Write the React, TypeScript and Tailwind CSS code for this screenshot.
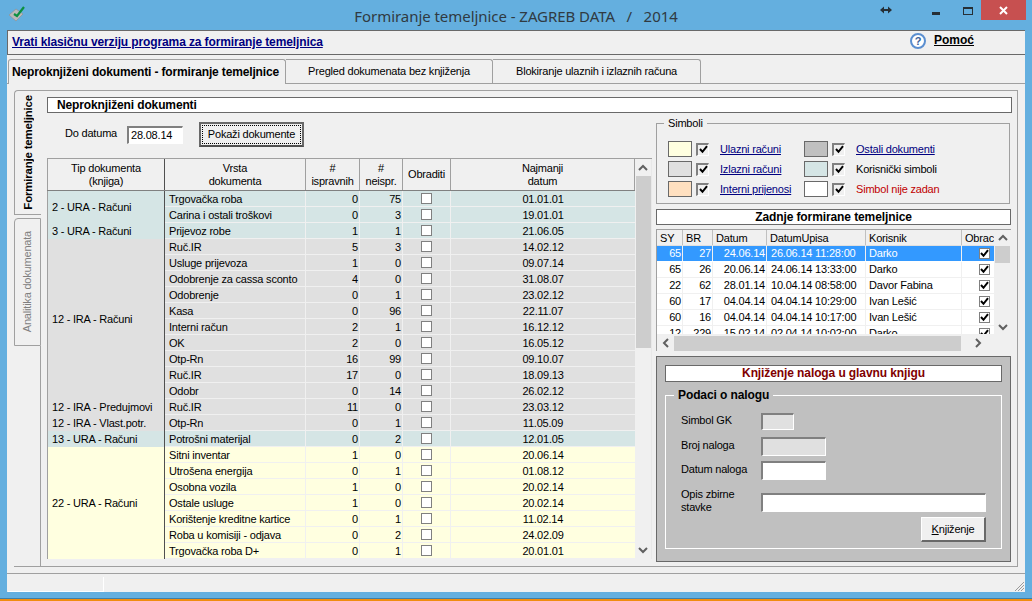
import React from "react";

type Row = [string, string, string, string];
type Group = { label: string; bg: string; rows: Row[] };

const groups: Group[] = [
  { label: "2 - URA - Računi", bg: "bg-[#d5e5e5]", rows: [["Trgovačka roba", "0", "75", "01.01.01"], ["Carina i ostali troškovi", "0", "3", "19.01.01"]] },
  { label: "3 - URA - Računi", bg: "bg-[#d5e5e5]", rows: [["Prijevoz robe", "1", "1", "21.06.05"]] },
  {
    label: "12 - IRA - Računi",
    bg: "bg-[#e0e0e0]",
    rows: [
      ["Ruč.IR", "5", "3", "14.02.12"],
      ["Usluge prijevoza", "1", "0", "09.07.14"],
      ["Odobrenje za cassa sconto", "4", "0", "31.08.07"],
      ["Odobrenje", "0", "1", "23.02.12"],
      ["Kasa", "0", "96", "22.11.07"],
      ["Interni račun", "2", "1", "16.12.12"],
      ["OK", "2", "0", "16.05.12"],
      ["Otp-Rn", "16", "99", "09.10.07"],
      ["Ruč.IR", "17", "0", "18.09.13"],
      ["Odobr", "0", "14", "26.02.12"],
    ],
  },
  { label: "12 - IRA - Predujmovi", bg: "bg-[#e0e0e0]", rows: [["Ruč.IR", "11", "0", "23.03.12"]] },
  { label: "12 - IRA - Vlast.potr.", bg: "bg-[#e0e0e0]", rows: [["Otp-Rn", "0", "1", "11.05.09"]] },
  { label: "13 - URA - Računi", bg: "bg-[#d5e5e5]", rows: [["Potrošni materijal", "0", "2", "12.01.05"]] },
  {
    label: "22 - URA - Računi",
    bg: "bg-[#ffffe0]",
    rows: [
      ["Sitni inventar", "1", "0", "20.06.14"],
      ["Utrošena energija", "0", "1", "01.08.12"],
      ["Osobna vozila", "1", "0", "20.02.14"],
      ["Ostale usluge", "1", "0", "20.02.14"],
      ["Korištenje kreditne kartice", "0", "1", "11.02.14"],
      ["Roba u komisiji - odjava", "0", "2", "24.02.09"],
      ["Trgovačka roba D+", "0", "1", "20.01.01"],
    ],
  },
];

const recent = [
  ["65", "27", "24.06.14", "26.06.14 11:28:00", "Darko"],
  ["65", "26", "20.06.14", "24.06.14 13:33:00", "Darko"],
  ["22", "62", "28.01.14", "10.04.14 08:58:00", "Davor Fabina"],
  ["60", "17", "04.04.14", "04.04.14 10:29:00", "Ivan Lešić"],
  ["60", "16", "04.04.14", "04.04.14 10:17:00", "Ivan Lešić"],
  ["12", "229", "15.02.14", "02.04.14 10:02:00", "Darko"],
];

const CheckMark = () => (
  <svg width="9" height="9" viewBox="0 0 9 9" className="block">
    <path d="M1 4 L3.5 6.8 L8 1.2" fill="none" stroke="#000" strokeWidth="2" />
  </svg>
);

const SunkenCheck = () => (
  <div className="w-[13px] h-[13px] flex items-center justify-center border-t-2 border-l-2 border-t-[#808080] border-l-[#808080] border-r border-b border-r-white border-b-white bg-[#f0f0f0]">
    <CheckMark />
  </div>
);

const Arrow = ({ dir }: { dir: "up" | "down" | "left" | "right" }) => {
  const d = { up: "M1 7 L5 3 L9 7", down: "M1 3 L5 7 L9 3", left: "M7 1 L3 5 L7 9", right: "M3 1 L7 5 L3 9" }[dir];
  return (
    <svg width="10" height="10" viewBox="0 0 10 10" className="block">
      <path d={d} fill="none" stroke="#606060" strokeWidth="2" />
    </svg>
  );
};

const Symbol = ({ color, text, link, red }: { color: string; text: string; link?: boolean; red?: boolean }) => (
  <div className="flex items-center h-4">
    <div className={`w-[24px] h-4 border border-[#696969] ${color}`} />
    <div className="ml-[4px]">
      <SunkenCheck />
    </div>
    <span className={`ml-[11px] whitespace-nowrap ${link ? "text-[#000080] underline" : ""} ${red ? "text-[#c00000]" : ""}`}>{text}</span>
  </div>
);

const Field = ({ label, bg, w, h, mt }: { label: React.ReactNode; bg: string; w: string; h: string; mt: string }) => (
  <div className={`flex items-center ${h} ${mt}`}>
    <div className="w-[80px] leading-[13px] -mt-[3px]">{label}</div>
    <div className={`${w} ${h} ${bg} border-t-2 border-l-2 border-t-[#808080] border-l-[#808080] border-r border-b border-r-white border-b-white`} />
  </div>
);

export default function App() {
  return (
    <div className="w-[1032px] h-[601px] overflow-hidden flex flex-col bg-[#64afdf] text-black font-['Liberation_Sans',Arial,sans-serif] text-[11px] tracking-[-0.2px] leading-[13px]">
      {/* Title bar */}
      <div className="h-[30px] grid grid-cols-[1fr_auto_1fr]">
        <div className="pl-[8px] pt-[5px]">
          <svg width="18" height="18" viewBox="0 0 18 18" className="block">
            <path d="M1 10 L8 4 L15 9 L8 16 Z" fill="#b9b9b9" stroke="#8d8d8d" strokeWidth="0.6" />
            <path d="M6 9 L9 11 L16 2" fill="none" stroke="#0c9040" strokeWidth="2.2" />
          </svg>
        </div>
        <div className="pt-[6px] text-[15px] tracking-[-0.05px] leading-[20px] text-[#303a42] font-['Noto_Sans',sans-serif] whitespace-pre">Formiranje temeljnice - ZAGREB DATA   /   2014</div>
        <div className="flex justify-end items-start pr-[6px]">
          <svg width="12" height="8" viewBox="0 0 12 8" className="mt-[6px] block">
            <path d="M0 4 L4 0.5 V3 H8 V0.5 L12 4 L8 7.5 V5 H4 V7.5 Z" fill="#262f36" />
          </svg>
          <div className="ml-[40px] mt-[12px] w-[8px] h-[3px] bg-[#262f36]" />
          <div className="ml-[23px] mt-[7px] w-[10px] h-[8px] border border-t-2 border-[#262f36]" />
          <div className="ml-[8px] w-[45px] h-[20px] bg-[#c75050] flex items-center justify-center">
            <svg width="9" height="9" viewBox="0 0 9 9" className="block">
              <path d="M1 1 L8 8 M8 1 L1 8" stroke="#fff" strokeWidth="2" />
            </svg>
          </div>
        </div>
      </div>

      {/* Window body */}
      <div className="ml-[7px] w-[1018px] h-[562px] bg-[#f0f0f0] flex flex-col">
        {/* Link bar */}
        <div className="h-[25px] border-y border-[#696969] border-l border-l-[#696969] flex justify-between pl-[4px]">
          <a className="mt-[5px] font-bold text-[#000080] underline text-[12px] tracking-[-0.12px] whitespace-nowrap">Vrati klasičnu verziju programa za formiranje temeljnica</a>
          <div className="flex items-start pr-[51px] pt-[2px]">
            <div className="w-[16px] h-[16px] rounded-full border-2 border-[#5b8fd0] bg-white flex items-center justify-center text-[11px] font-bold text-[#3a5f98]">?</div>
            <a className="ml-[8px] font-bold underline text-[12px] tracking-[0] mt-[1px]">Pomoć</a>
          </div>
        </div>

        {/* Tabs */}
        <div className="mt-[4px] h-[25px] flex pl-[1px] items-stretch">
          <div className="relative w-[278px] border-t border-l border-r border-[#a0a0a0] rounded-t-[3px] bg-[#f0f0f0] z-10 flex items-center justify-center pr-[3px] font-bold text-[12px] tracking-[-0.15px] whitespace-nowrap">Neproknjiženi dokumenti - formiranje temeljnice</div>
          <div className="w-[207px] h-[24px] border-t border-r border-[#a0a0a0] rounded-tr-[3px] flex items-center justify-center whitespace-nowrap">Pregled dokumenata bez knjiženja</div>
          <div className="w-[208px] h-[24px] border-t border-r border-[#a0a0a0] rounded-tr-[3px] flex items-center justify-center whitespace-nowrap">Blokiranje ulaznih i izlaznih računa</div>
        </div>

        {/* Tab page */}
        <div className="-mt-px border-t border-b border-[#a0a0a0] pt-[6px] pb-[6px] pl-[7px] flex h-[491px]">
          {/* Vertical tabs */}
          <div className="w-[27px] flex flex-col h-[477px]">
            <div className="h-[125px] border-t border-l border-b border-[#a0a0a0] rounded-tl-[4px] flex items-center justify-center">
              <span className="[writing-mode:vertical-rl] rotate-180 font-bold text-[11.5px] tracking-[-0.2px] whitespace-nowrap">Formiranje temeljnice</span>
            </div>
            <div className="mt-[3px] h-[128px] border border-[#a0a0a0] rounded-tl-[4px] flex items-center justify-center text-[#808080]">
              <span className="[writing-mode:vertical-rl] rotate-180 whitespace-nowrap">Analitika dokumenata</span>
            </div>
            <div className="flex-1 border-r border-b border-[#a0a0a0]" />
          </div>

          {/* Page */}
          <div className="w-[977px] h-[477px] border-t border-r border-b border-[#a0a0a0] pt-[6px] pl-[6px] pr-[5px]">
            <div className="w-[965px] h-[16px] bg-white border border-[#696969] flex items-center pl-[9px] font-bold text-[12px] tracking-[-0.13px]">Neproknjiženi dokumenti</div>

            <div className="flex">
              {/* Left column */}
              <div className="w-[605px]">
                <div className="mt-[9px] h-[25px] flex items-center pl-[18px]">
                  <span className="w-[62px] whitespace-nowrap -mt-[2px]">Do datuma</span>
                  <div className="w-[56px] h-[18px] bg-white border-t-2 border-l-2 border-t-[#808080] border-l-[#808080] border-r border-b border-r-white border-b-white flex items-center pl-[2px]">28.08.14</div>
                  <div className="ml-[16px] w-[105px] h-[25px] border-2 border-[#696969] border-b-[#505050] p-[1px]">
                    <div className="w-full h-full border border-dotted border-black flex items-center justify-center whitespace-nowrap">Pokaži dokumente</div>
                  </div>
                </div>

                {/* Table */}
                <div className="mt-[11px] flex border-t border-[#a0a0a0] h-[401px]">
                  <div className="w-[588px]">
                    <div className="flex h-[32px] bg-[#f0f0f0] border-b border-[#808080] text-center">
                      <div className="w-[118px] pt-[1px] border-l border-l-[#a0a0a0] border-r border-r-[#505050] flex items-center justify-center">Tip dokumenta<br />(knjiga)</div>
                      <div className="w-[141px] pt-[1px] border-r border-[#a0a0a0] flex items-center justify-center">Vrsta<br />dokumenta</div>
                      <div className="w-[54px] pt-[1px] border-r border-[#a0a0a0] flex items-center justify-center">#<br />ispravnih</div>
                      <div className="w-[43px] pt-[1px] border-r border-[#a0a0a0] flex items-center justify-center">#<br />neispr.</div>
                      <div className="w-[48px] border-r border-[#a0a0a0] flex items-center justify-center">Obraditi</div>
                      <div className="w-[184px] pt-[1px] border-r border-[#a0a0a0] flex items-center justify-center">Najmanji<br />datum</div>
                    </div>
                    {groups.map((g, i) => (
                      <div key={i} className={`flex ${g.bg}`}>
                        <div className="w-[118px] border-l border-l-[#a0a0a0] border-r border-r-[#505050] flex items-center pl-[4px] whitespace-nowrap">{g.label}</div>
                        <div>
                          {g.rows.map((r, j) => (
                            <div key={j} className="flex h-[16px] border-b border-[#f0f0f0]">
                              <div className="w-[141px] border-r border-[#f0f0f0] pl-[4px] pt-[1px] flex items-center whitespace-nowrap">{r[0]}</div>
                              <div className="w-[54px] border-r border-[#f0f0f0] pr-[1px] pt-[1px] flex items-center justify-end">{r[1]}</div>
                              <div className="w-[43px] border-r border-[#f0f0f0] pr-[1px] pt-[1px] flex items-center justify-end">{r[2]}</div>
                              <div className="w-[48px] border-r border-[#f0f0f0] flex items-center justify-center">
                                <div className="w-[11px] h-[11px] bg-white border border-[#808080]" />
                              </div>
                              <div className="w-[184px] pt-[1px] flex items-center justify-center">{r[3]}</div>
                            </div>
                          ))}
                        </div>
                      </div>
                    ))}
                  </div>
                  {/* Table scrollbar */}
                  <div className="w-[17px] bg-[#f0f0f0] flex flex-col items-center border-r border-[#e8e8e8]">
                    <div className="h-[17px] flex items-center"><Arrow dir="up" /></div>
                    <div className="w-[15px] h-[172px] bg-[#cdcdcd]" />
                    <div className="flex-1" />
                    <div className="h-[17px] mb-[1px] flex items-center"><Arrow dir="down" /></div>
                  </div>
                </div>
              </div>

              {/* Right column */}
              <div className="ml-[4px] w-[355px]">
                <fieldset className="mt-[3px] w-[354px] border border-[#a0a0a0] pl-[11px] pb-[6px] min-w-0">
                  <legend className="-ml-[4px] px-[4px] h-[14px] leading-[14px]">Simboli</legend>
                  <div className="mt-[11px] grid grid-cols-[136px_1fr] gap-y-[4px]">
                    <Symbol color="bg-[#ffffe0]" text="Ulazni računi" link />
                    <Symbol color="bg-[#c0c0c0]" text="Ostali dokumenti" link />
                    <Symbol color="bg-[#e0e0e0]" text="Izlazni računi" link />
                    <Symbol color="bg-[#d5e5e5]" text="Korisnički simboli" />
                    <Symbol color="bg-[#ffe0c0]" text="Interni prijenosi" link />
                    <Symbol color="bg-white" text="Simbol nije zadan" red />
                  </div>
                </fieldset>

                <div className="mt-[5px] h-[16px] bg-white border border-[#696969] flex items-center justify-center font-bold text-[12px] tracking-[-0.1px]">Zadnje formirane temeljnice</div>

                {/* Recent grid */}
                <div className="mt-[4px] h-[122px] w-[355px] bg-[#f0f0f0] flex flex-col border-l border-t border-[#a0a0a0]">
                  <div className="flex flex-1 min-h-0">
                    <div className="w-[337px] overflow-hidden">
                      <div className="flex h-[16px] items-stretch border-b border-[#e0e0e0] whitespace-nowrap">
                        <div className="w-[26px] border-r border-[#c0c0c0] pl-[3px] pt-[2px]">SY</div>
                        <div className="w-[30px] border-r border-[#c0c0c0] pl-[3px] pt-[2px]">BR</div>
                        <div className="w-[54px] border-r border-[#c0c0c0] pl-[3px] pt-[2px]">Datum</div>
                        <div className="w-[99px] border-r border-[#c0c0c0] pl-[3px] pt-[2px]">DatumUpisa</div>
                        <div className="w-[96px] border-r border-[#c0c0c0] pl-[3px] pt-[2px]">Korisnik</div>
                        <div className="w-[32px] pl-[3px] pt-[2px] overflow-hidden">Obrac</div>
                      </div>
                      <div className="h-[88px] overflow-hidden bg-white">
                        {recent.map((r, i) => (
                          <div key={i} className={`flex h-[16px] border-b items-center whitespace-nowrap ${i === 0 ? "bg-[#3399ff] text-white border-white" : "border-[#f0f0f0]"}`}>
                            <div className="w-[26px] border-r border-[#f0f0f0] h-full pr-[1px] pt-[1px] text-right">{r[0]}</div>
                            <div className="w-[30px] border-r border-[#f0f0f0] h-full pr-[1px] pt-[1px] text-right">{r[1]}</div>
                            <div className="w-[54px] border-r border-[#f0f0f0] h-full pr-[1px] pt-[1px] text-right">{r[2]}</div>
                            <div className="w-[99px] border-r border-[#f0f0f0] h-full pl-[4px] pt-[1px]">{r[3]}</div>
                            <div className="w-[96px] border-r border-[#f0f0f0] h-full pl-[3px] pt-[1px]">{r[4]}</div>
                            <div className="w-[32px] h-full pl-[17px]">
                              <div className="w-[11px] h-[11px] mt-[2px] bg-white border border-[#808080] flex items-center justify-center">
                                <CheckMark />
                              </div>
                            </div>
                          </div>
                        ))}
                      </div>
                    </div>
                    <div className="w-[17px] flex flex-col items-center">
                      <div className="h-[16px] flex items-center"><Arrow dir="up" /></div>
                      <div className="w-[15px] h-[17px] bg-[#cdcdcd]" />
                      <div className="flex-1" />
                      <div className="h-[17px] flex items-center"><Arrow dir="down" /></div>
                    </div>
                  </div>
                  <div className="h-[16px] w-[337px] flex items-center">
                    <div className="w-[17px] flex justify-center"><Arrow dir="left" /></div>
                    <div className="w-[287px] h-[15px] bg-[#cdcdcd]" />
                    <div className="flex-1 flex justify-center"><Arrow dir="right" /></div>
                  </div>
                </div>

                {/* Posting panel */}
                <div className="mt-[5px] h-[206px] bg-[#c0c0c0] border border-[#696969] pt-[8px] pl-[8px]">
                  <div className="w-[337px] h-[17px] bg-white border border-[#696969] flex items-center justify-center font-bold text-[12px] tracking-[-0.1px] text-[#800000]">Knjiženje naloga u glavnu knjigu</div>
                  <fieldset className="mt-[5px] w-[337px] border border-white pl-[15px] pb-[6px] min-w-0">
                    <legend className="-ml-[7px] px-[4px] h-[16px] leading-[16px] font-bold text-[12px] tracking-[-0.1px]">Podaci o nalogu</legend>
                    <Field label="Simbol GK" bg="bg-[#e0e0e0]" w="w-[33px]" h="h-[17px]" mt="mt-[10px]" />
                    <Field label="Broj naloga" bg="bg-[#e0e0e0]" w="w-[65px]" h="h-[19px]" mt="mt-[7px]" />
                    <Field label="Datum naloga" bg="bg-white" w="w-[65px]" h="h-[19px]" mt="mt-[5px]" />
                    <Field label={<>Opis zbirne<br />stavke</>} bg="bg-white" w="w-[225px]" h="h-[19px]" mt="mt-[13px]" />
                    <div className="mt-[5px] ml-[240px] w-[65px] h-[25px] bg-[#f0f0f0] border-t border-l border-t-white border-l-white border-r-2 border-b-2 border-r-[#696969] border-b-[#696969] flex items-center justify-center">
                      <span><span className="underline">K</span>njiženje</span>
                    </div>
                  </fieldset>
                </div>
              </div>
            </div>
          </div>
        </div>

        {/* Status bar */}
        <div className="flex-1 flex items-end justify-between pl-[1px]">
          <div className="w-[96px] h-[15px] border-r border-b border-white" />
          <svg width="12" height="12" viewBox="0 0 12 12" className="block">
            <path d="M11 2 L2 11 M11 5 L5 11 M11 8 L8 11" stroke="#9a9a9a" strokeWidth="1" />
          </svg>
        </div>
      </div>

      {/* Bottom edge */}
      <div className="flex-1 flex flex-col justify-end">
        <div className="h-[1px] bg-[#3d7fa8]" />
        <div className="h-[2px] bg-[#f08c10]" />
      </div>
    </div>
  );
}
